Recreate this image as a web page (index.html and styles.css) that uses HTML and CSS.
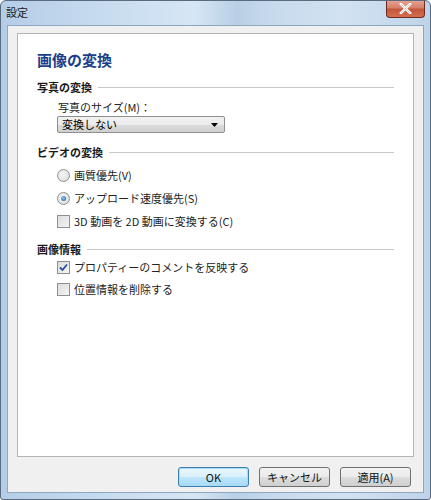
FILE: index.html
```html
<!DOCTYPE html>
<html lang="ja">
<head>
    <meta charset="UTF-8">
    <title>設定</title>
    <link rel="stylesheet" href="styles.css">
</head>
<body>
    <div class="window">
        <div class="titlebar">
            <span class="title">設定</span>
            <button class="close" type="button">
                <svg width="13" height="11" viewBox="0 0 13 11"><path d="M2 1 L11 10 M11 1 L2 10" stroke="#fff" stroke-width="2.6" stroke-linecap="square"/><path d="M2 1 L11 10 M11 1 L2 10" stroke="#7a2a1e" stroke-width="0.6" fill="none" opacity="0.4"/></svg>
            </button>
        </div>
        <div class="client">
            <div class="panel">
                <h1>画像の変換</h1>

                <div class="group first">写真の変換</div>
                <div class="field-label">写真のサイズ(M)：</div>
                <div class="combo">
                    <span>変換しない</span>
                    <svg width="7" height="4" viewBox="0 0 7 4"><path d="M0 0 H7 L3.5 4 Z" fill="#000"/></svg>
                </div>

                <div class="group">ビデオの変換</div>
                <label class="option"><span class="radio"></span>画質優先(V)</label>
                <label class="option"><span class="radio checked"></span>アップロード速度優先(S)</label>
                <label class="option"><span class="check"></span>3D 動画を 2D 動画に変換する(C)</label>

                <div class="group last">画像情報</div>
                <label class="option tight">
                    <span class="check">
                        <svg width="9" height="9" viewBox="0 0 9 9"><path d="M1 4.5 L3.5 7 L8 1.5" stroke="#2a4e9c" stroke-width="1.8" fill="none"/></svg>
                    </span>プロパティーのコメントを反映する
                </label>
                <label class="option small"><span class="check"></span>位置情報を削除する</label>
            </div>
            <div class="buttons">
                <button class="btn default" type="button">OK</button>
                <button class="btn" type="button">キャンセル</button>
                <button class="btn" type="button">適用(A)</button>
            </div>
        </div>
    </div>
</body>
</html>
```

FILE: styles.css
```css
body {
    margin: 0;
    background: #fff;
    font-family: "Noto Sans CJK JP", "Liberation Sans", sans-serif;
    font-size: 11px;
    color: #000;
}
.window {
    width: 431px;
    height: 500px;
    box-sizing: border-box;
    border: 1px solid #5a6b80;
    border-radius: 6px 6px 3px 3px;
    background: linear-gradient(90deg, #b4cde6 0%, #c8dcef 25%, #d6e6f5 45%, #b9cfe5 55%, #c6d9ec 62%, #d2e2f2 80%, #bfd3e8 100%);
    display: flex;
    flex-direction: column;
    overflow: hidden;
}
.titlebar {
    height: 24px;
    display: flex;
    justify-content: space-between;
    align-items: flex-start;
    padding: 0 5px 0 5px;
}
.title {
    font-size: 11px;
    line-height: 22px;
    color: #1a1a1a;
}
.close {
    width: 39px;
    height: 18px;
    margin-top: -1px;
    border: 1px solid #6b2a22;
    border-top: none;
    border-radius: 0 0 4px 4px;
    background: linear-gradient(#e6a597 0%, #d8806c 45%, #c4553a 55%, #d36f4f 100%);
    display: flex;
    align-items: center;
    justify-content: center;
    padding: 0;
}
.client {
    flex: 1;
    margin: 0 6px 6px 6px;
    background: #f0f0f0;
    border: 1px solid #8ea7c1;
    display: flex;
    flex-direction: column;
    padding: 7px 9px 0 9px;
}
.panel {
    height: 422px;
    background: #fff;
    border: 1px solid #b5b5b5;
    padding: 0 19px 0 19px;
}
h1 {
    margin: 15px 0 0 0;
    font-size: 15px;
    line-height: 22px;
    font-weight: bold;
    color: #1b3f8a;
}
.group {
    display: flex;
    align-items: center;
    font-weight: bold;
    line-height: 16px;
    height: 16px;
    margin-top: 11px;
    color: #1a1a1a;
}
.group.first {
    margin-top: 8px;
}
.group.last {
    margin-top: 12px;
}
.group::after {
    content: "";
    flex: 1;
    height: 1px;
    background: #c8c8c8;
    margin-left: 6px;
}
.field-label {
    margin: 4px 0 0 21px;
    line-height: 16px;
    height: 16px;
    color: #222;
}
.combo {
    margin: 1px 0 0 20px;
    width: 156px;
    height: 15px;
    border: 1px solid #8e8f8f;
    border-radius: 2px;
    background: linear-gradient(#f2f2f2 0%, #ebebeb 50%, #dddddd 51%, #cfcfcf 100%);
    display: flex;
    align-items: center;
    justify-content: space-between;
    padding: 0 6px 0 4px;
    box-sizing: content-box;
}
.combo span {
    line-height: 15px;
}
.option {
    display: flex;
    align-items: center;
    margin: 7px 0 0 20px;
    line-height: 16px;
    height: 16px;
    color: #222;
}
.option.tight {
    margin-top: 2px;
}
.option.small {
    margin-top: 6px;
}
.radio {
    width: 11px;
    height: 11px;
    border: 1px solid #8f8f8f;
    border-radius: 50%;
    background: radial-gradient(circle at 40% 40%, #f6f6f6, #d6d6d6);
    margin-right: 4px;
    display: flex;
    align-items: center;
    justify-content: center;
}
.radio.checked::after {
    content: "";
    width: 5px;
    height: 5px;
    border-radius: 50%;
    background: radial-gradient(circle at 40% 40%, #8fc6ef, #1c5a9a);
}
.check {
    width: 11px;
    height: 11px;
    border: 1px solid #8f8f8f;
    background: linear-gradient(135deg, #dcdcdc, #f4f4f4);
    margin-right: 4px;
    display: flex;
    align-items: center;
    justify-content: center;
}
.buttons {
    display: flex;
    justify-content: flex-end;
    gap: 10px;
    padding: 10px 3px 0 0;
}
.btn {
    width: 71px;
    height: 20px;
    border: 1px solid #707070;
    border-radius: 3px;
    background: linear-gradient(#f2f2f2 0%, #ebebeb 50%, #dddddd 51%, #cfcfcf 100%);
    font-family: "Noto Sans CJK JP", "Liberation Sans", sans-serif;
    font-size: 11px;
    padding: 0;
    color: #111;
}
.btn.default {
    border-color: #3c7fb1;
    box-shadow: inset 0 0 0 1px #a8dbf5;
    background: linear-gradient(#eaf6fd 0%, #d9f0fc 50%, #bee6fd 51%, #a7d9f5 100%);
}
```
